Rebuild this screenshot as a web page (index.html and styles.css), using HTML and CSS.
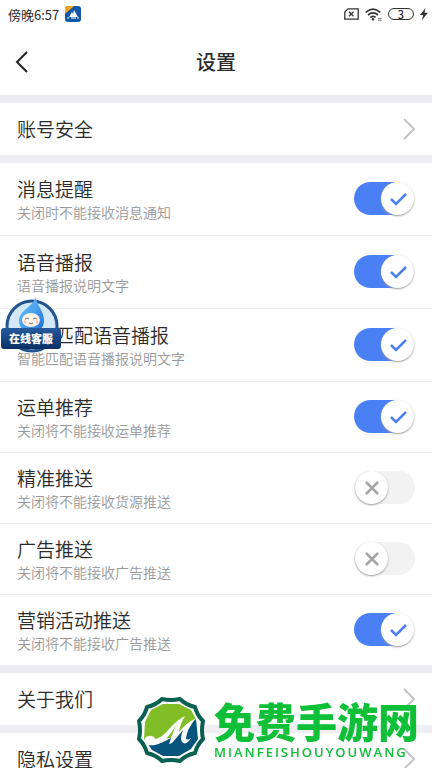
FILE: index.html
```html
<!DOCTYPE html>
<html lang="zh-CN">
<head>
<meta charset="utf-8">
<meta name="viewport" content="width=device-width, initial-scale=1">
<title>设置</title>
<link rel="stylesheet" href="styles.css">
</head>
<body>
<div class="status">
  <span class="clock">傍晚6:57</span>
  <svg class="app" width="16" height="16" viewBox="0 0 16 16" aria-hidden="true">
    <rect width="16" height="16" rx="3" fill="#1358a8"/>
    <path d="M0 8V3Q0 0 3 0H9Z" fill="#f5a81c"/>
    <path d="M4 11L7 6L8 8L9 4L13 11Z" fill="#fff"/>
    <path d="M2 12H4M6 12H11M12 12H14" stroke="#fff"/>
  </svg>
  <span class="spacer"></span>
  <svg width="15" height="12" viewBox="0 0 15 12" fill="none" stroke="#333" stroke-width="1.3" aria-hidden="true">
    <path d="M4 .8H14.2V11.2H.8V4Z"/><path d="M5 3.8L9.5 8.3M9.5 3.8L5 8.3"/>
  </svg>
  <svg class="wifi" width="17" height="13" viewBox="0 0 17 13" fill="none" stroke="#333" stroke-width="1.7" aria-hidden="true">
    <path d="M.7 4.3Q8 -2.2 15.3 4.3M3 7Q8 2.8 13 7M5.4 9.4Q8 7.4 10.6 9.4"/>
    <circle cx="8" cy="11.3" r="1.2" fill="#333" stroke="none"/>
    <path d="M13 10.5H16.500M13 12.3H16.500" stroke="#777" stroke-width="1"/>
  </svg>
  <span class="battery">3</span>
  <svg width="8" height="12" viewBox="0 0 8 12" aria-hidden="true"><path d="M5.500 0L0 7H3.2L2 12L8 4.8H4.6Z" fill="#333"/></svg>
</div>
<header class="bar">
  <button class="back" type="button" aria-label="返回">
    <svg width="14" height="22" viewBox="0 0 14 22" fill="none" stroke="#222" stroke-width="2"><path d="M12 1L2 11L12 21"/></svg>
  </button>
  <h1>设置</h1>
</header>
<main>
  <a class="link" href="#account">账号安全<svg width="12" height="22" viewBox="0 0 12 22"><path d="M1 1L11 11L1 21"/></svg></a>
  <section class="group">
    <label class="row tall"><span class="text"><span class="name">消息提醒</span><span class="note">关闭时不能接收消息通知</span></span><input class="switch" type="checkbox" checked></label>
    <label class="row tall"><span class="text"><span class="name">语音播报</span><span class="note">语音播报说明文字</span></span><input class="switch" type="checkbox" checked></label>
    <label class="row tall"><span class="text"><span class="name">智能匹配语音播报</span><span class="note">智能匹配语音播报说明文字</span></span><input class="switch" type="checkbox" checked></label>
    <label class="row"><span class="text"><span class="name">运单推荐</span><span class="note">关闭将不能接收运单推荐</span></span><input class="switch" type="checkbox" checked></label>
    <label class="row"><span class="text"><span class="name">精准推送</span><span class="note">关闭将不能接收货源推送</span></span><input class="switch" type="checkbox"></label>
    <label class="row"><span class="text"><span class="name">广告推送</span><span class="note">关闭将不能接收广告推送</span></span><input class="switch" type="checkbox"></label>
    <label class="row"><span class="text"><span class="name">营销活动推送</span><span class="note">关闭将不能接收广告推送</span></span><input class="switch" type="checkbox" checked></label>
  </section>
  <a class="link" href="#about">关于我们<svg width="12" height="22" viewBox="0 0 12 22"><path d="M1 1L11 11L1 21"/></svg></a>
  <a class="link" href="#privacy">隐私设置<svg width="12" height="22" viewBox="0 0 12 22"><path d="M1 1L11 11L1 21"/></svg></a>
</main>
<button class="service" type="button">
  <svg width="60" height="56" viewBox="0 0 60 56" aria-hidden="true">
    <defs>
      <linearGradient id="drop" x1="0" y1="0" x2="1" y2="1"><stop offset="0" stop-color="#6fc0f8"/><stop offset=".5" stop-color="#4aa2ee"/><stop offset="1" stop-color="#1c68c8"/></linearGradient>
    </defs>
    <circle cx="31" cy="29" r="25" fill="#d3e8f7" stroke="#22558f" stroke-width="3"/>
    <path d="M35 0C35 8 43 13 43 24A12.500 12 0 0 1 18 24C18 13 31 11 35 0Z" fill="url(#drop)"/>
    <ellipse cx="30" cy="23" rx="9" ry="7" fill="#fff3ea"/>
    <path d="M24 22Q26 20 28 22M32 22Q34 20 36 22M28 26Q30 28 32 26" fill="none" stroke="#6b4a48" stroke-width=".8"/>
    <circle cx="24" cy="25" r="1.500" fill="#f7c5b8"/><circle cx="36" cy="25" r="1.500" fill="#f7c5b8"/>
  </svg>
  <span>在线客服</span>
</button>
<div class="mark">
  <svg width="68" height="66" viewBox="0 0 68 66" aria-hidden="true">
    <path d="M25 2Q34 4 43 2Q49 8 58 10Q60 18 66 24Q64 33 66 42Q60 48 58 56Q49 58 43 64Q34 62 25 64Q19 58 10 56Q8 48 2 42Q4 33 2 24Q8 18 10 10Q19 8 25 2Z" fill="#fff" stroke="#086052" stroke-width="4" stroke-linejoin="round"/>
    <path d="M26 7H42L54 13L59 22L40 40L10 44L7 42L8 25L14 13Z" fill="#80bd27"/>
    <path d="M11 47L24 46L40 38L59 22L61 42L54 52L42 59H26L15 53Z" fill="#07547c"/>
    <path d="M8 41Q12 37 17 40L18 42Q25 41 33 31Q40 23 48 19Q43 27 42 35Q49 26 59 21Q50 32 49 41Q49 44 54 41Q50 48 46 46Q42 43 46 33L35 46L32 47Q35 38 39 28Q29 46 18 48Q12 49 8 47Z" fill="#fff"/>
  </svg>
  <div class="words"><strong>免费手游网</strong><span>MIANFEISHOUYOUWANG</span></div>
</div>
</body>
</html>
```
FILE: styles.css
```css
* { box-sizing: border-box; }
body {
  margin: 0;
  min-height: 100vh;
  overflow: hidden;
  background: #fff;
  color: #2b2b2b;
  font-family: "Noto Sans CJK SC", sans-serif;
}
button { border: 0; padding: 0; background: none; font: inherit; }
.status {
  display: flex;
  align-items: center;
  gap: 6px;
  height: 28px;
  padding: 0 4px 0 8px;
  font-size: 13px;
}
.spacer { flex: 1; }
.battery {
  width: 26px;
  height: 12px;
  border: 1px solid #333;
  border-radius: 6px;
  font-size: 11px;
  font-weight: 500;
  line-height: 10px;
  text-align: center;
}
.bar {
  display: grid;
  grid-template-columns: 48px 1fr 48px;
  align-items: center;
  height: 67px;
}
.back { display: flex; padding-left: 15px; }
h1 { margin: 0; font-size: 20px; font-weight: 500; line-height: 28px; text-align: center; }
.link {
  display: flex;
  align-items: center;
  justify-content: space-between;
  height: 60px;
  padding: 0 17px;
  border-top: 8px solid #eeeef2;
  color: inherit;
  font-size: 19px;
  font-weight: 350;
  line-height: 24px;
  text-decoration: none;
}
.link svg { fill: none; stroke: #c4c4c6; stroke-width: 2; }
.group { border-top: 8px solid #eeeef2; }
.row {
  display: flex;
  align-items: center;
  justify-content: space-between;
  height: 71px;
  padding: 0 17px;
  border-bottom: 1px solid #eeeef0;
}
.tall { height: 73px; }
.row:last-child { height: 70px; border-bottom: 0; }
.text { display: flex; flex-direction: column; padding-top: 2px; font-weight: 350; }
.name { font-size: 19px; line-height: 24px; }
.note { color: #999; font-size: 14px; line-height: 22px; }
.switch {
  appearance: none;
  display: flex;
  align-items: center;
  width: 61px;
  height: 33px;
  margin: 0 0 2px;
  padding: 0 1px;
  border-radius: 17px;
  background: #f2f2f2;
}
.switch::before {
  content: "";
  width: 33px;
  height: 33px;
  border-radius: 50%;
  background: #fff url("data:image/svg+xml,%3Csvg xmlns='http://www.w3.org/2000/svg' viewBox='0 0 33 33'%3E%3Cpath d='M11 11L23 23M23 11L11 23' fill='none' stroke='%23a5a5a5' stroke-width='2.500'/%3E%3C/svg%3E");
  box-shadow: 0 1px 2px #999;
}
.switch:checked { justify-content: flex-end; background: linear-gradient(to right, #4b80f5 70%, transparent 70%); }
.switch:checked::before {
  background-image: url("data:image/svg+xml,%3Csvg xmlns='http://www.w3.org/2000/svg' viewBox='0 0 33 33'%3E%3Cpath d='M10 17L15 22L25 12' fill='none' stroke='%234b80f5' stroke-width='2.500'/%3E%3C/svg%3E");
}
.service { position: fixed; left: 1px; top: 297px; width: 60px; height: 56px; }
.service svg { display: block; }
.service span {
  position: absolute;
  left: 0;
  right: 0;
  top: 31px;
  height: 21px;
  border-radius: 3px;
  background: linear-gradient(#245b9e, #0c2f64);
  color: #fff;
  font-size: 11px;
  font-weight: 900;
  line-height: 21px;
  text-align: center;
}
.mark {
  position: fixed;
  right: 13px;
  bottom: 5px;
  display: flex;
  align-items: center;
  gap: 9px;
  color: #0fbf38;
}
.words { display: flex; flex-direction: column; }
.words strong { font-size: 41px; font-weight: 900; line-height: 44px; }
.words span { font-family: "Open Sans", sans-serif; font-size: 13px; font-weight: 600; line-height: 20px; letter-spacing: 2px; }
```
